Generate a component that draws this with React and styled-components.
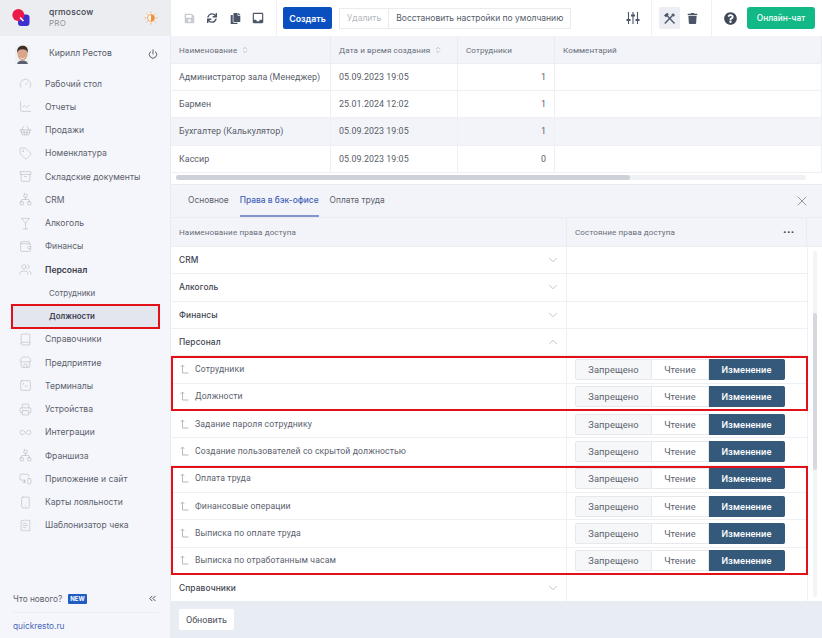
import React from 'react';
import styled, { createGlobalStyle } from 'styled-components';
import {
  Gauge, ChartLine, ShoppingBasket, Tag, Archive, Network, Martini, Wallet, Users, Book, Store,
  SquareTerminal, Printer, Infinity as InfinityIcon, MonitorSmartphone, Smartphone, ReceiptText,
  Power, ChevronDown, ChevronUp, X, ChevronsLeft, ChevronsUpDown,
} from 'lucide-react';
import { FaSave, FaCopy, FaTrash, FaQuestionCircle, FaSync } from 'react-icons/fa';
import { MdInbox } from 'react-icons/md';

const GlobalStyle = createGlobalStyle`
  html, body { margin: 0; padding: 0; height: 100%; }
  body { font-family: Roboto, "Noto Sans", sans-serif; background: #fff; color: #3f4550; overflow: hidden; }
  * { box-sizing: border-box; }
`;

const Page = styled.div`
  display: flex;
  width: 822px;
  height: 638px;
`;

const Sidebar = styled.aside`
  width: 171px;
  flex: none;
  display: flex;
  flex-direction: column;
  background: #f5f6fb;
  border-right: 1px solid #e9ebf0;
`;

const Brand = styled.div`
  height: 36px;
  flex: none;
  display: flex;
  align-items: center;
  padding: 0 12px;
  background: #ecedf1;
`;

const BrandText = styled.div`
  margin-left: 19px;
  flex: 1;
  font-size: 8.5px;
  line-height: 11px;
  letter-spacing: 0.2px;
  font-family: Inter, sans-serif;
  color: #3a404c;
  font-weight: 500;
  span { display: block; color: #8b909b; font-weight: 400; font-size: 8px; }
`;

const Profile = styled.div`
  height: 36px;
  flex: none;
  display: flex;
  align-items: center;
  padding: 0 12px 0 15px;
  font-size: 8.6px;
  font-family: Inter, sans-serif;
  color: #555b67;
`;

const ProfileName = styled.div`
  margin-left: 19px;
  flex: 1;
  margin-top: -2px;
`;

const Nav = styled.nav`
  flex: 1;
`;

const NavItem = styled.div`
  height: 23.25px;
  display: flex;
  align-items: center;
  margin: ${(p) => (p.$selected ? '0 11px 0 12px' : '0')};
  padding-left: ${(p) => (p.$selected ? '37px' : p.$sub ? '49px' : '19px')};
  font-family: Inter, sans-serif;
  font-size: ${(p) => (p.$sub ? '7.9px' : '8.6px')};
  font-weight: ${(p) => (p.$active ? 600 : 400)};
  color: ${(p) => (p.$active ? '#3a404c' : '#5b616d')};
  background: ${(p) => (p.$selected ? '#e4e6ef' : 'transparent')};
  outline: ${(p) => (p.$selected ? '2.5px solid #e3101a' : 'none')};
  outline-offset: -1px;

  svg { flex: none; margin-right: 13px; color: #adb1ba; }
`;

const SideFooter = styled.div`
  flex: none;
  padding: 0 12px 0 13px;
`;

const WhatsNew = styled.div`
  height: 28px;
  display: flex;
  align-items: center;
  font-size: 8.3px;
  font-family: Inter, sans-serif;
  color: #5b616d;
  border-bottom: 1px solid #eceef3;
  svg { margin-left: auto; color: #3f4550; }
`;

const NewBadge = styled.span`
  margin-left: 6px;
  background: #1f5cc4;
  color: #fff;
  font-size: 6px;
  font-weight: 700;
  padding: 2px 2px;
  border-radius: 1px;
  line-height: 6px;
`;

const SiteLink = styled.div`
  height: 25px;
  display: flex;
  align-items: center;
  font-family: Inter, sans-serif;
  font-size: 8.3px;
  color: #4a66b8;
`;

const Main = styled.main`
  flex: 1;
  min-width: 0;
  display: flex;
  flex-direction: column;
`;

const Toolbar = styled.div`
  height: 36px;
  flex: none;
  display: flex;
  align-items: center;
`;

const ToolGroup = styled.div`
  height: 100%;
  display: flex;
  align-items: center;
  gap: ${(p) => p.$gap || 0}px;
  padding: ${(p) => p.$pad || '0'};
  border-right: ${(p) => (p.$line ? '1px solid #eef0f3' : 'none')};
  margin-left: ${(p) => (p.$push ? 'auto' : '0')};
`;

const IconSlot = styled.div`
  width: ${(p) => p.$w || 16}px;
  height: 22px;
  display: flex;
  align-items: center;
  justify-content: center;
  border-radius: 2px;
  background: ${(p) => (p.$on ? '#eceef3' : 'transparent')};
  color: ${(p) => p.$color || '#4b5568'};
`;

const PrimaryButton = styled.button`
  width: 49px;
  height: 22px;
  margin-left: 6px;
  border: 0;
  border-radius: 2px;
  background: #0a4fc0;
  color: #fff;
  font: 600 8.8px Inter, sans-serif;
  padding: 0;
`;

const GhostButton = styled.div`
  height: 21px;
  padding: 0 7px;
  display: flex;
  align-items: center;
  border: 1px solid #e9ebef;
  margin-left: ${(p) => (p.$joined ? '-1px' : '7px')};
  font-family: Inter, sans-serif;
  font-size: 8.5px;
  color: ${(p) => (p.$off ? '#b3b7bf' : '#555b67')};
  white-space: nowrap;
`;

const ChatButton = styled.button`
  width: 68px;
  height: 22px;
  margin-left: 8px;
  border: 0;
  border-radius: 3px;
  background: #12b886;
  color: #fff;
  font: 500 8.3px Inter, sans-serif;
  padding: 0;
`;

const TopTable = styled.div`
  height: 149px;
  flex: none;
  position: relative;
  border-bottom: 1px solid #e9ebf0;
`;

const HeadRow = styled.div`
  display: grid;
  grid-template-columns: ${(p) => p.$cols};
  height: ${(p) => p.$h}px;
  background: #f3f4f9;
  border-bottom: 1px solid #eceef2;
`;

const HeadCell = styled.div`
  display: flex;
  align-items: center;
  padding-left: ${(p) => p.$pad || 8}px;
  font-size: 8.1px;
  letter-spacing: 0.1px;
  color: #686e79;
  border-right: 1px solid #e9ebf0;
  svg { margin-left: 4px; color: #a6aab2; }
`;

const BodyRow = styled.div`
  display: grid;
  grid-template-columns: 160px 127px 97px 1fr;
  height: 27.2px;
  background: ${(p) => (p.$selected ? '#f3f4f9' : '#fff')};
  border-bottom: 1px solid #eff0f3;
`;

const BodyCell = styled.div`
  display: flex;
  align-items: center;
  justify-content: ${(p) => (p.$right ? 'flex-end' : 'flex-start')};
  padding: 0 8px;
  font-size: 8.9px;
  letter-spacing: 0.05px;
  color: #565c67;
  border-right: 1px solid #eff0f3;
  white-space: nowrap;
`;

const HScroll = styled.div`
  position: absolute;
  left: 5px;
  right: 16px;
  bottom: 4px;
  height: 5px;
  border-radius: 3px;
  background: #f0f1f4;
  &::before {
    content: '';
    display: block;
    width: 72%;
    height: 100%;
    border-radius: 3px;
    background: #cfd1d8;
  }
`;

const Tabs = styled.div`
  height: 33px;
  flex: none;
  display: flex;
  align-items: stretch;
  gap: 11px;
  padding: 0 12px 0 17px;
  background: #f3f4f9;
  border-bottom: 1px solid #e9ebf0;
  svg { margin: auto 0 auto auto; color: #7d838d; }
`;

const Tab = styled.div`
  display: flex;
  align-items: center;
  font-family: Inter, sans-serif;
  font-size: 8.4px;
  color: ${(p) => (p.$active ? '#3f5fb8' : '#5b616d')};
  font-weight: ${(p) => (p.$active ? 500 : 400)};
  border-bottom: 2px solid ${(p) => (p.$active ? '#8295cf' : 'transparent')};
`;

const Rights = styled.div`
  flex: 1;
  min-height: 0;
  display: flex;
  flex-direction: column;
`;

const RightsBody = styled.div`
  flex: 1;
  display: flex;
  min-height: 0;
`;

const RightsList = styled.div`
  flex: 1;
  min-width: 0;
`;

const VScroll = styled.div`
  width: 15px;
  flex: none;
  padding: 4px 5px;
  border-left: 1px solid #eff0f3;
  display: flex;
`;

const VTrack = styled.div`
  flex: 1;
  border-radius: 3px;
  padding-top: 62px;
  background: #f3f4f6;
  display: flex;
  &::before {
    content: '';
    flex: 1;
    height: 157px;
    border-radius: 3px;
    background: #d6d8de;
  }
`;

const RightRow = styled.div`
  display: grid;
  grid-template-columns: 396px 1fr;
  height: 27.33px;
  border-bottom: 1px solid #eff0f3;
`;

const NameCell = styled.div`
  display: flex;
  align-items: center;
  justify-content: ${(p) => (p.$group ? 'space-between' : 'flex-start')};
  padding: 0 6px 0 8px;
  border-right: 1px solid #eff0f3;
  font-family: ${(p) => (p.$group ? 'Inter, sans-serif' : 'Roboto, sans-serif')};
  font-size: ${(p) => (p.$group ? '8.4px' : '8.7px')};
  font-weight: ${(p) => (p.$group ? 500 : 400)};
  color: ${(p) => (p.$group ? '#3f4550' : '#5b616d')};
  letter-spacing: 0.1px;
  margin-top: ${(p) => (p.$group ? '0' : '-1px')};
  svg { color: #a9adb6; }
`;

const StateCell = styled.div`
  display: flex;
  align-items: center;
  padding-left: 8px;
`;

const Segments = styled.div`
  display: flex;
  height: 21px;
`;

const Segment = styled.div`
  display: flex;
  align-items: center;
  justify-content: center;
  width: ${(p) => p.$w}px;
  font-size: 9.3px;
  letter-spacing: 0.1px;
  color: ${(p) => (p.$on ? '#fff' : '#5b616d')};
  font-weight: ${(p) => (p.$on ? 500 : 400)};
  background: ${(p) => (p.$on ? '#35597a' : p.$first ? '#f6f7f8' : '#fff')};
  border: 1px solid ${(p) => (p.$on ? '#35597a' : '#e6e8eb')};
  border-left-width: ${(p) => (p.$first ? '1px' : '0')};
  border-radius: ${(p) => (p.$first ? '2px 0 0 2px' : p.$on ? '0 2px 2px 0' : '0')};
`;

const Marked = styled.div`
  outline: 2.5px solid #e3101a;
  outline-offset: -2px;
  position: relative;
  margin-right: -1px;
  z-index: 1;
`;

const Dots = styled.span`
  margin-left: auto;
  margin-right: 11px;
  font-weight: 700;
  color: #3f4550;
  letter-spacing: 1px;
`;

const Footer = styled.div`
  height: 37px;
  flex: none;
  display: flex;
  align-items: center;
  padding-left: 8px;
  background: #e8edf3;
`;

const RefreshButton = styled.div`
  height: 21px;
  width: 55px;
  display: flex;
  align-items: center;
  justify-content: center;
  background: #fff;
  border-radius: 2px;
  font-size: 9px;
  color: #4a505b;
`;

const Logo = () => (
  <svg width="18" height="18" viewBox="0 0 18 18">
    <rect x="6" y="5.5" width="11.5" height="11.5" rx="3" fill="#3d2fd0" />
    <circle cx="6.3" cy="6" r="6" fill="#ec1848" />
    <path d="M8 8.5l3.5 3.5" stroke="#fff" strokeWidth="1.6" />
  </svg>
);

const Sun = () => (
  <svg width="14" height="14" viewBox="0 0 14 14">
    <circle cx="7" cy="7" r="3.4" fill="#fff" stroke="#f0a14a" />
    <path d="M7 3.6a3.4 3.4 0 0 1 0 6.8z" fill="#f0913a" />
    <path d="M7 .5v1.6M7 11.9v1.6M.5 7h1.6M11.9 7h1.6M2.4 2.4l1.1 1.1M10.5 10.5l1.1 1.1M2.4 11.6l1.1-1.1M10.5 3.500l1.100-1.100" stroke="#f3b26b" strokeWidth="1" />
  </svg>
);

const Avatar = () => (
  <svg width="15" height="19" viewBox="0 0 15 19">
    <rect width="15" height="19" rx="3" fill="#eef0f2" />
    <ellipse cx="7.5" cy="9" rx="5" ry="6.5" fill="#d9a58b" />
    <path d="M2.300 8C1.500 2.500 5 .8 8 .8s5.500 2 4.700 7.200C12 5 10 4.200 7.500 4.200S3 5 2.300 8z" fill="#3d2e28" />
    <path d="M5 12.500c1.500 1 3.500 1 5 0-.5 1.800-4.500 1.800-5 0z" fill="#fff" />
    <path d="M2 19c.5-2.500 3-3.500 5.500-3.500S12.500 16.500 13 19z" fill="#5a6270" />
  </svg>
);

const TreeArrow = () => (
  <svg width="9" height="10" viewBox="0 0 9 10" style={{ marginRight: 6, marginLeft: 1 }}>
    <path d="M2.500 1v8h6M.8 2.800l1.700-1.800 1.700 1.800" fill="none" stroke="#b4b8c0" strokeWidth="1" />
  </svg>
);

const Sliders = () => (
  <svg width="14" height="14" viewBox="0 0 14 14" fill="none" stroke="#4b5568" strokeWidth="1.100">
    <path d="M2.500 1v12M7 1v12M11.500 1v12" />
    <path d="M.5 9h4M5 4.500h4M9.500 9h4" strokeWidth="1.800" />
  </svg>
);

const Tools = () => (
  <svg width="13" height="13" viewBox="0 0 13 13" fill="none" stroke="#4b5568">
    <path d="M3.500 3l8 8.500" strokeWidth="1.300" />
    <path d="M1 3.500L4 .8l1.800 1.700-2.800 2.800z" fill="#4b5568" stroke="none" />
    <path d="M9.500 3.500L1.800 11.500" strokeWidth="1.300" />
    <path d="M8.300 2.800L10.500 1l.3 1.500 1.500.3-1.800 2z" fill="#4b5568" stroke="none" />
  </svg>
);

const navIcons = [
  ['Рабочий стол', Gauge], ['Отчеты', ChartLine], ['Продажи', ShoppingBasket], ['Номенклатура', Tag],
  ['Складские документы', Archive], ['CRM', Network], ['Алкоголь', Martini], ['Финансы', Wallet],
];
const navRest = [
  ['Справочники', Book], ['Предприятие', Store], ['Терминалы', SquareTerminal], ['Устройства', Printer],
  ['Интеграции', InfinityIcon], ['Франшиза', Network], ['Приложение и сайт', MonitorSmartphone],
  ['Карты лояльности', Smartphone], ['Шаблонизатор чека', ReceiptText],
];

const staff = [
  ['Администратор зала (Менеджер)', '05.09.2023 19:05', 1],
  ['Бармен', '25.01.2024 12:02', 1],
  ['Бухгалтер (Калькулятор)', '05.09.2023 19:05', 1],
  ['Кассир', '05.09.2023 19:05', 0],
];

const Access = () => (
  <StateCell>
    <Segments>
      <Segment $first $w={77}>Запрещено</Segment>
      <Segment $w={57}>Чтение</Segment>
      <Segment $on $w={76}>Изменение</Segment>
    </Segments>
  </StateCell>
);

const Group = ({ name, open }) => (
  <RightRow>
    <NameCell $group>
      {name}
      {open ? <ChevronUp size={14} strokeWidth={1.2} /> : <ChevronDown size={14} strokeWidth={1.2} />}
    </NameCell>
    <div />
  </RightRow>
);

const Right = ({ name }) => (
  <RightRow>
    <NameCell><TreeArrow />{name}</NameCell>
    <Access />
  </RightRow>
);

const App = () => (
  <Page>
    <GlobalStyle />
    <Sidebar>
      <Brand>
        <Logo />
        <BrandText>qrmoscow<span>PRO</span></BrandText>
        <Sun />
      </Brand>
      <Profile>
        <Avatar />
        <ProfileName>Кирилл Рестов</ProfileName>
        <Power size={10} color="#3f4550" />
      </Profile>
      <Nav>
        {navIcons.map(([name, Icon]) => (
          <NavItem key={name}><Icon size={13} strokeWidth={1} />{name}</NavItem>
        ))}
        <NavItem $active><Users size={13} strokeWidth={1} />Персонал</NavItem>
        <NavItem $sub>Сотрудники</NavItem>
        <NavItem $sub $selected $active>Должности</NavItem>
        {navRest.map(([name, Icon], i) => (
          <NavItem key={name + i}><Icon size={13} strokeWidth={1} />{name}</NavItem>
        ))}
      </Nav>
      <SideFooter>
        <WhatsNew>Что нового?<NewBadge>NEW</NewBadge><ChevronsLeft size={11} /></WhatsNew>
        <SiteLink>quickresto.ru</SiteLink>
      </SideFooter>
    </Sidebar>
    <Main>
      <Toolbar>
        <ToolGroup $line $gap={7} $pad="0 10px 0 10px">
          <IconSlot $color="#c9ccd3"><FaSave size={11} /></IconSlot>
          <IconSlot><FaSync size={10} /></IconSlot>
          <IconSlot><FaCopy size={11} /></IconSlot>
          <IconSlot><MdInbox size={14} /></IconSlot>
        </ToolGroup>
        <PrimaryButton>Создать</PrimaryButton>
        <GhostButton $off>Удалить</GhostButton>
        <GhostButton $joined>Восстановить настройки по умолчанию</GhostButton>
        <ToolGroup $push $line $pad="0 10px 0 0"><IconSlot><Sliders /></IconSlot></ToolGroup>
        <ToolGroup $line $gap={2} $pad="0 8px 0 7px">
          <IconSlot $on $w={21}><Tools /></IconSlot>
          <IconSlot $w={21}><FaTrash size={11} /></IconSlot>
        </ToolGroup>
        <ToolGroup $pad="0 7px 0 9px">
          <IconSlot $w={18} $color="#3f4a5c"><FaQuestionCircle size={13} /></IconSlot>
          <ChatButton>Онлайн-чат</ChatButton>
        </ToolGroup>
      </Toolbar>
      <TopTable>
        <HeadRow $cols="160px 127px 97px 1fr" $h={28}>
          <HeadCell>Наименование<ChevronsUpDown size={8} /></HeadCell>
          <HeadCell>Дата и время создания<ChevronsUpDown size={8} /></HeadCell>
          <HeadCell>Сотрудники</HeadCell>
          <HeadCell>Комментарий</HeadCell>
        </HeadRow>
        {staff.map(([name, date, count], i) => (
          <BodyRow key={name} $selected={i === 2}>
            <BodyCell>{name}</BodyCell>
            <BodyCell>{date}</BodyCell>
            <BodyCell $right>{count}</BodyCell>
            <BodyCell />
          </BodyRow>
        ))}
        <HScroll />
      </TopTable>
      <Tabs>
        <Tab>Основное</Tab>
        <Tab $active>Права в бэк-офисе</Tab>
        <Tab>Оплата труда</Tab>
        <X size={16} strokeWidth={1.2} />
      </Tabs>
      <Rights>
        <HeadRow $cols="396px 240px 1fr" $h={29}>
          <HeadCell>Наименование права доступа</HeadCell>
          <HeadCell>
            Состояние права доступа
            <Dots>•••</Dots>
          </HeadCell>
          <div />
        </HeadRow>
        <RightsBody>
          <RightsList>
            <Group name="CRM" />
            <Group name="Алкоголь" />
            <Group name="Финансы" />
            <Group name="Персонал" open />
            <Marked>
              <Right name="Сотрудники" />
              <Right name="Должности" />
            </Marked>
            <Right name="Задание пароля сотруднику" />
            <Right name="Создание пользователей со скрытой должностью" />
            <Marked>
              <Right name="Оплата труда" />
              <Right name="Финансовые операции" />
              <Right name="Выписка по оплате труда" />
              <Right name="Выписка по отработанным часам" />
            </Marked>
            <Group name="Справочники" />
          </RightsList>
          <VScroll><VTrack /></VScroll>
        </RightsBody>
      </Rights>
      <Footer><RefreshButton>Обновить</RefreshButton></Footer>
    </Main>
  </Page>
);

export default App;
